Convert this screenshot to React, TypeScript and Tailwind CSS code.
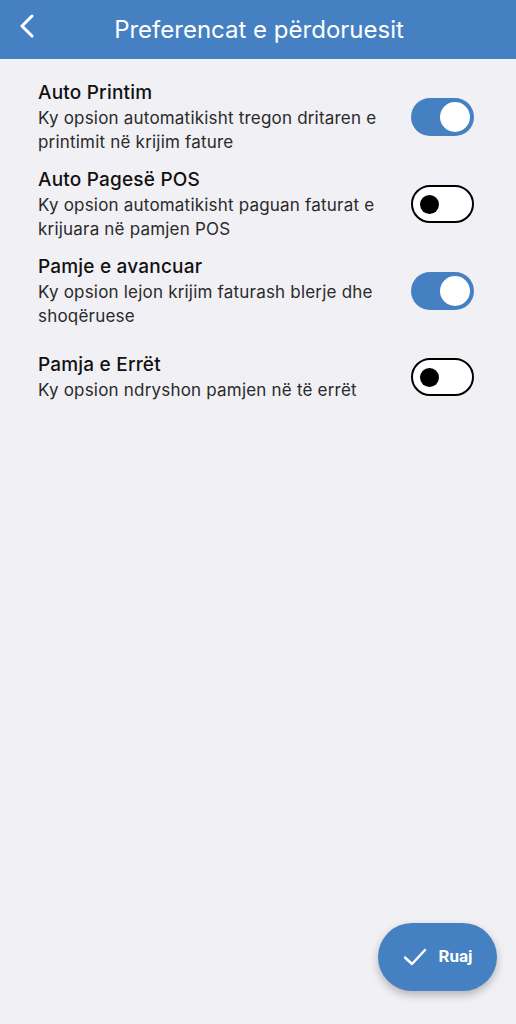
import React, { useState } from 'react';

type Pref = { title: string; desc: string; on: boolean };

const initial: Pref[] = [
  { title: 'Auto Printim', desc: 'Ky opsion automatikisht tregon dritaren e printimit në krijim fature', on: true },
  { title: 'Auto Pagesë POS', desc: 'Ky opsion automatikisht paguan faturat e krijuara në pamjen POS', on: false },
  { title: 'Pamje e avancuar', desc: 'Ky opsion lejon krijim faturash blerje dhe shoqëruese', on: true },
  { title: 'Pamja e Errët', desc: 'Ky opsion ndryshon pamjen në të errët', on: false },
];

const Toggle: React.FC<{ on: boolean; onClick: () => void }> = ({ on, onClick }) => (
  <button
    onClick={onClick}
    className={`w-[63px] h-[38px] rounded-full flex items-center shrink-0 ${
      on ? 'bg-[#4580c3] justify-end pr-[4px]' : 'bg-white border-[2.5px] border-black justify-start pl-[7px]'
    }`}
  >
    <span className={on ? 'w-[30px] h-[30px] rounded-full bg-white' : 'w-[19px] h-[19px] rounded-full bg-black'} />
  </button>
);

export default function App() {
  const [prefs, setPrefs] = useState(initial);

  return (
    <div className="w-[516px] h-[1024px] bg-[#f1f0f5] relative font-['Inter',sans-serif] overflow-hidden">
      {/* Header */}
      <header className="h-[59px] bg-[#4580c2] flex items-center relative">
        <svg className="absolute left-[19px] top-[14px]" width="16" height="24" viewBox="0 0 16 24" fill="none">
          <path d="M13 2 L3 12 L13 22" stroke="white" strokeWidth="3" strokeLinecap="round" strokeLinejoin="round" />
        </svg>
        <h1 className="w-full text-center text-white text-[24px] pl-[2px]">Preferencat e përdoruesit</h1>
      </header>

      {/* Options */}
      <div className="pt-[15px] pl-[38px] pr-[42px]">
        {prefs.map((p, i) => (
          <div key={p.title} className="h-[86.7px] flex items-center justify-between gap-4">
            <div className="w-[352px]">
              <div className="text-[19px] leading-[26px] text-[#111] font-medium tracking-[0.2px]">{p.title}</div>
              <div className="text-[17px] leading-[24px] text-[#2a2a2a] tracking-[0.2px]">{p.desc}</div>
            </div>
            <Toggle
              on={p.on}
              onClick={() => setPrefs(prefs.map((q, j) => (j === i ? { ...q, on: !q.on } : q)))}
            />
          </div>
        ))}
      </div>

      {/* Save FAB */}
      <button className="absolute left-[378px] top-[923px] w-[119px] h-[68px] rounded-full bg-[#4580c2] flex items-center justify-center gap-[12px] shadow-[0_4px_8px_rgba(0,0,0,0.25)]">
        <svg width="24" height="24" viewBox="0 0 24 24" fill="none">
          <path d="M2 12.5 L9 19 L22 5" stroke="white" strokeWidth="2.4" strokeLinecap="round" strokeLinejoin="round" />
        </svg>
        <span className="text-white font-bold text-[17px] font-['Roboto',sans-serif]">Ruaj</span>
      </button>
    </div>
  );
}
